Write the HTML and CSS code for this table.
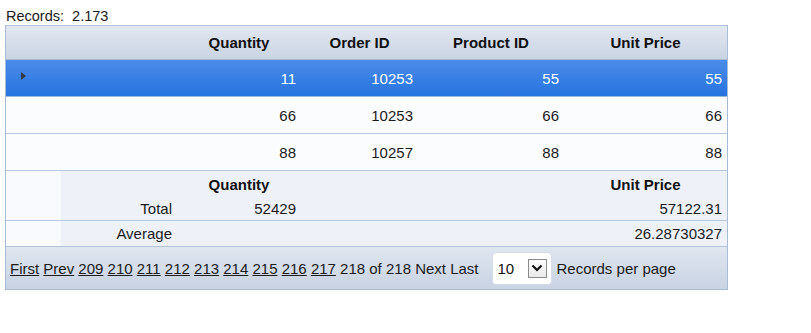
FILE: index.html
```html
<!DOCTYPE html>
<html>
<head>
<meta charset="utf-8">
<link rel="stylesheet" href="styles.css">
</head>
<body>
<div class="records">Records:&nbsp; 2.173</div>
<div class="grid">
  <div class="row head">
    <div class="cell"></div>
    <div class="cell">Quantity</div>
    <div class="cell">Order ID</div>
    <div class="cell">Product ID</div>
    <div class="cell">Unit Price</div>
  </div>
  <div class="row data selected">
    <div class="cell ind"><span class="arrow"></span></div>
    <div class="cell">11</div>
    <div class="cell">10253</div>
    <div class="cell">55</div>
    <div class="cell">55</div>
  </div>
  <div class="row data">
    <div class="cell ind"></div>
    <div class="cell">66</div>
    <div class="cell">10253</div>
    <div class="cell">66</div>
    <div class="cell">66</div>
  </div>
  <div class="row data">
    <div class="cell ind"></div>
    <div class="cell">88</div>
    <div class="cell">10257</div>
    <div class="cell">88</div>
    <div class="cell">88</div>
  </div>
  <div class="summary total">
    <div class="sum-line sum-head">
      <div class="cell"></div>
      <div class="cell">Quantity</div>
      <div class="cell"></div>
      <div class="cell"></div>
      <div class="cell">Unit Price</div>
    </div>
    <div class="sum-line">
      <div class="cell">Total</div>
      <div class="cell">52429</div>
      <div class="cell"></div>
      <div class="cell"></div>
      <div class="cell">57122.31</div>
    </div>
  </div>
  <div class="summary avg">
    <div class="sum-line">
      <div class="cell">Average</div>
      <div class="cell"></div>
      <div class="cell"></div>
      <div class="cell"></div>
      <div class="cell">26.28730327</div>
    </div>
  </div>
  <div class="pager">
    <span class="pages"><a href="#">First</a> <a href="#">Prev</a> <a href="#">209</a> <a href="#">210</a> <a href="#">211</a> <a href="#">212</a> <a href="#">213</a> <a href="#">214</a> <a href="#">215</a> <a href="#">216</a> <a href="#">217</a> 218 of 218 Next Last</span>
    <div class="select"><span class="sel-val">10</span><span class="sel-btn"><svg width="12" height="8" viewBox="0 0 12 8"><path d="M1.5 1.5 L6 6 L10.5 1.5" fill="none" stroke="#111" stroke-width="2.2"/></svg></span></div>
    <span class="rpp">Records per page</span>
  </div>
</div>
</body>
</html>
```
FILE: styles.css
```css
html, body {
  margin: 0;
  padding: 0;
  background: #ffffff;
  font-family: "Liberation Sans", Arial, sans-serif;
  color: #1b1b1b;
}
.records {
  font-size: 14.5px;
  padding: 8px 0 0 6px;
  height: 17px;
  line-height: 17px;
}
.grid {
  margin-left: 5px;
  width: 721px;
  border: 1px solid #a9bcd6;
  border-top-color: #b3c3d9;
}
.row, .sum-line {
  display: grid;
  grid-template-columns: 171px 124px 117px 146px 163px;
}
.cell {
  font-size: 15px;
  white-space: nowrap;
}
.head {
  height: 33px;
  align-items: center;
  background: linear-gradient(#e2e8f1, #c9d4e3);
  border-bottom: 1px solid #a9bcd6;
}
.head .cell {
  text-align: center;
  font-weight: bold;
  color: #111;
}
.data {
  height: 36px;
  align-items: center;
  background: #fbfcfe;
  border-bottom: 1px solid #b9c9dd;
}
.data .cell {
  text-align: right;
  padding-right: 5px;
}
.data .cell.ind {
  text-align: left;
  padding: 0 0 0 15px;
  display: flex;
  align-items: center;
}
.selected {
  background: linear-gradient(#4b8ce9, #2773e0);
  color: #ffffff;
  border-bottom-color: #9fb6d6;
}
.arrow {
  width: 0;
  height: 0;
  border-top: 4px solid transparent;
  border-bottom: 4px solid transparent;
  border-left: 5px solid #333a48;
  margin-top: -4px;
}
.summary {
  background: linear-gradient(to right, #f8fafd 55px, #eef2f8 55px);
}
.total {
  height: 50px;
  border-bottom: 1px solid #b9c9dd;
  display: flex;
  flex-direction: column;
  padding-top: 1px;
  box-sizing: border-box;
}
.total .sum-line {
  height: 24px;
  align-items: center;
}
.avg {
  height: 25px;
}
.avg .sum-line {
  height: 25px;
  align-items: center;
}
.sum-line .cell {
  text-align: right;
  padding-right: 5px;
}
.sum-head .cell {
  text-align: center;
  font-weight: bold;
  color: #111;
  padding-right: 0;
}
.pager {
  height: 42px;
  border-top: 1px solid #b3c3d9;
  background: linear-gradient(#dfe6f0, #c8d3e3);
  display: flex;
  align-items: center;
  padding-left: 4px;
  font-size: 15px;
}
.pages {
  white-space: pre;
}
.pager a {
  color: #1b1b1b;
  text-decoration: underline;
}
.select {
  margin-left: 13px;
  width: 60px;
  height: 33px;
  box-sizing: border-box;
  background: #ffffff;
  border: 1px solid #d6dde8;
  border-radius: 4px;
  display: flex;
  align-items: center;
}
.sel-val {
  margin-left: 5px;
  width: 30px;
  font-size: 15px;
  color: #111;
}
.sel-btn {
  width: 19px;
  height: 19px;
  box-sizing: border-box;
  border: 1px solid #8a8a8a;
  background: linear-gradient(#fdfdfd, #e9e9e9);
  display: flex;
  align-items: center;
  justify-content: center;
}
.rpp {
  margin-left: 5px;
}
```
